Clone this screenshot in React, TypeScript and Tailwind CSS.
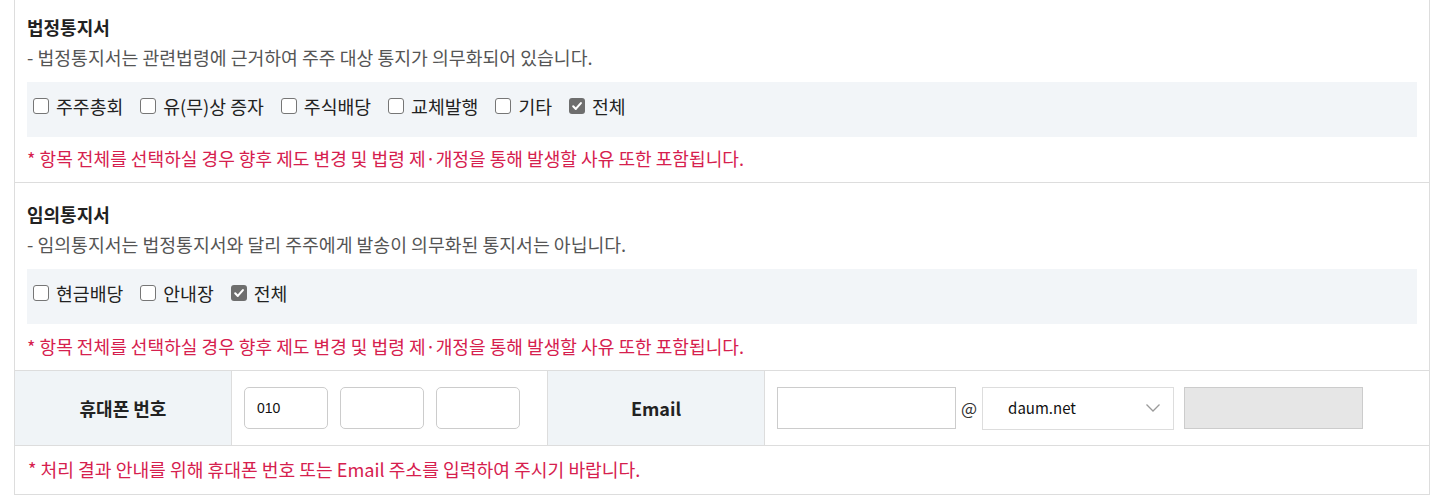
import React from "react";

const FONT = { fontFamily: '"Noto Sans CJK KR", "Noto Sans", sans-serif' };

function Check({ checked, label }: { checked?: boolean; label: string }) {
  return (
    <label className="flex items-center">
      {checked ? (
        <span className="flex h-[16px] w-[16px] shrink-0 items-center justify-center rounded-[3px] bg-[#6e6e6e]">
          <svg width="12" height="12" viewBox="0 0 12 12">
            <path d="M2.2 6.3 L4.8 8.9 L9.9 3.1" fill="none" stroke="#fff" strokeWidth="2.1" strokeLinecap="round" strokeLinejoin="round" />
          </svg>
        </span>
      ) : (
        <span className="block h-[16px] w-[16px] shrink-0 rounded-[3px] border border-[#767676] bg-white" />
      )}
      <span className="ml-[7px] text-[18.3px] leading-[24px] text-[#222]">{label}</span>
    </label>
  );
}

function Section({
  title,
  desc,
  items,
  first,
}: {
  title: string;
  desc: string;
  items: { label: string; checked?: boolean }[];
  first?: boolean;
}) {
  return (
    <div className={`border-b border-[#dddddd] px-[12px] pb-[12px] ${first ? "pt-[14px]" : "pt-[18px]"}`}>
      <div className="text-[18px] font-bold leading-[26px] text-[#222]">{title}</div>
      <div className="mt-[5px] text-[18.3px] leading-[24px] text-[#555]">{desc}</div>
      <div className="mt-[13px] flex h-[55px] items-center gap-[17px] bg-[#f2f5f8] pb-[8px] pl-[6px]">
        {items.map((it) => (
          <Check key={it.label} label={it.label} checked={it.checked} />
        ))}
      </div>
      <div className={`${first ? "mt-[9px]" : "mt-[10px]"} text-[18.1px] leading-[24px] text-[#d6204e]`}>
        * 항목 전체를 선택하실 경우 향후 제도 변경 및 법령 제·개정을 통해 발생할 사유 또한 포함됩니다.
      </div>
    </div>
  );
}

export default function App() {
  return (
    <div className="h-[496px] w-full overflow-hidden bg-white" style={FONT}>
      <div className="ml-[14px] w-[1416px] border-x border-b border-[#dddddd]">
        <Section
          first
          title="법정통지서"
          desc="- 법정통지서는 관련법령에 근거하여 주주 대상 통지가 의무화되어 있습니다."
          items={[
            { label: "주주총회" },
            { label: "유(무)상 증자" },
            { label: "주식배당" },
            { label: "교체발행" },
            { label: "기타" },
            { label: "전체", checked: true },
          ]}
        />
        <Section
          title="임의통지서"
          desc="- 임의통지서는 법정통지서와 달리 주주에게 발송이 의무화된 통지서는 아닙니다."
          items={[{ label: "현금배당" }, { label: "안내장" }, { label: "전체", checked: true }]}
        />
        <div className="flex h-[75px] border-b border-[#dddddd]">
          <div className="flex w-[217px] items-center justify-center border-r border-[#dddddd] bg-[#f0f4f7] text-[18px] font-bold text-[#222]">
            휴대폰 번호
          </div>
          <div className="flex w-[316px] items-center gap-[12px] border-r border-[#dddddd] pl-[12px]">
            <div
              className="flex h-[42px] w-[84px] items-center rounded-[5px] border border-[#cccccc] pl-[12px] text-[14px] text-[#111]"
              style={{ fontFamily: '"Liberation Sans", Arial, sans-serif' }}
            >
              010
            </div>
            <div className="h-[42px] w-[84px] rounded-[5px] border border-[#cccccc]" />
            <div className="h-[42px] w-[84px] rounded-[5px] border border-[#cccccc]" />
          </div>
          <div className="flex w-[217px] items-center justify-center border-r border-[#dddddd] bg-[#f0f4f7] text-[18px] font-bold text-[#222]">
            Email
          </div>
          <div className="flex flex-1 items-center pl-[12px]">
            <div className="h-[42px] w-[179px] border border-[#cccccc]" />
            <span className="mx-[5px] text-[17px] text-[#333]">@</span>
            <div className="flex h-[43px] w-[192px] items-center justify-between border border-[#dddddd] pl-[25px] pr-[12px]">
              <span className="text-[15px] text-[#111]">daum.net</span>
              <svg width="16" height="10" viewBox="0 0 16 10">
                <path d="M1.5 1.5 L8 8 L14.5 1.5" fill="none" stroke="#9a9a9a" strokeWidth="1.3" />
              </svg>
            </div>
            <div className="ml-[10px] h-[42px] w-[179px] border border-[#cccccc] bg-[#e6e6e6]" />
          </div>
        </div>
        <div className="flex h-[48px] items-center pl-[13px] text-[18.2px] text-[#d6204e]">
          * 처리 결과 안내를 위해 휴대폰 번호 또는 Email 주소를 입력하여 주시기 바랍니다.
        </div>
      </div>
    </div>
  );
}
